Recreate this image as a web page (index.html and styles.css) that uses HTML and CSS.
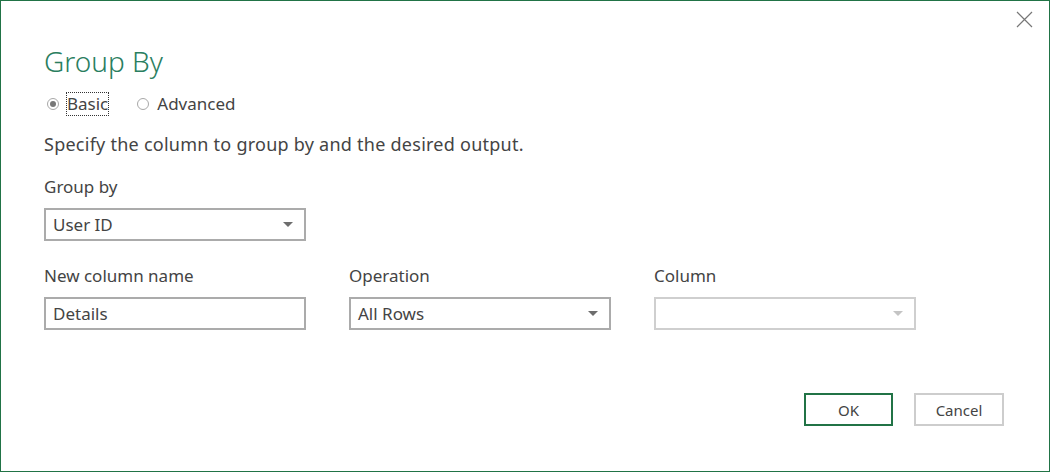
FILE: index.html
```html
<!DOCTYPE html>
<html>
<head>
<meta charset="utf-8">
<link rel="stylesheet" href="styles.css">
</head>
<body>
<div class="dialog">
  <button class="close" aria-label="Close">
    <svg width="17" height="17" viewBox="0 0 17 17"><path d="M1 1 L16 16 M16 1 L1 16" stroke="#777" stroke-width="1.2" fill="none"/></svg>
  </button>
  <h1 class="title">Group By</h1>
  <div class="radios">
    <label class="radio"><span class="circle checked"></span><span class="rlabel focus">Basic</span></label>
    <label class="radio"><span class="circle"></span><span class="rlabel">Advanced</span></label>
  </div>
  <p class="desc">Specify the column to group by and the desired output.</p>
  <div class="field">
    <div class="label">Group by</div>
    <div class="select"><span>User ID</span><span class="arrow"></span></div>
  </div>
  <div class="row">
    <div class="field">
      <div class="label">New column name</div>
      <div class="input">Details</div>
    </div>
    <div class="field">
      <div class="label">Operation</div>
      <div class="select"><span>All Rows</span><span class="arrow"></span></div>
    </div>
    <div class="field">
      <div class="label">Column</div>
      <div class="select disabled"><span></span><span class="arrow"></span></div>
    </div>
  </div>
  <div class="buttons">
    <button class="btn primary">OK</button>
    <button class="btn">Cancel</button>
  </div>
</div>
</body>
</html>
```
FILE: styles.css
```css
* { box-sizing: border-box; }
html, body { margin: 0; padding: 0; background: #fff; }
body { font-family: "Noto Sans", "Open Sans", sans-serif; color: #444; }
.dialog {
  position: relative;
  width: 1050px;
  height: 472px;
  border: 1px solid #217346;
  padding: 0 0 0 43px;
  display: flex;
  flex-direction: column;
}
.close {
  position: absolute;
  top: 9px;
  right: 15px;
  width: 19px;
  height: 19px;
  padding: 0;
  border: 0;
  background: transparent;
  display: flex;
  align-items: center;
  justify-content: center;
}
.title {
  margin: 40px 0 0 0;
  font-size: 28px;
  line-height: 40px;
  font-weight: 300;
  color: #2a7e60;
}
.radios {
  display: flex;
  gap: 29px;
  margin-top: 11px;
  height: 24px;
  align-items: center;
  padding-left: 3px;
}
.radio { display: flex; align-items: center; gap: 8px; font-size: 17px; }
.circle {
  width: 12px;
  height: 12px;
  border: 1px solid #a8a8a8;
  border-radius: 50%;
  display: flex;
  align-items: center;
  justify-content: center;
}
.circle.checked::after {
  content: "";
  width: 6px;
  height: 6px;
  border-radius: 50%;
  background: #777;
}
.rlabel { line-height: 22px; color: #444; }
.rlabel.focus { outline: 1px dotted #333; outline-offset: 0; }
.desc {
  margin: 16px 0 0 0;
  font-size: 18px;
  letter-spacing: 0.25px;
  line-height: 24px;
}
.field { display: flex; flex-direction: column; width: 262px; }
.label { font-size: 17px; line-height: 22px; height: 22px; margin-bottom: 10px; }
.desc + .field { margin-top: 20px; }
.row { display: flex; gap: 43px; margin-top: 24px; }
.select, .input {
  height: 33px;
  border: 2px solid #ababab;
  display: flex;
  align-items: center;
  justify-content: space-between;
  padding: 0 11px 0 7px;
  font-size: 17px;
  color: #444;
  background: #fff;
}
.select.disabled { border-color: #cfcfcf; }
.arrow {
  width: 0; height: 0;
  border-left: 5px solid transparent;
  border-right: 5px solid transparent;
  border-top: 5px solid #6d6d6d;
}
.disabled .arrow { border-top-color: #c4c4c4; }
.buttons {
  display: flex;
  justify-content: flex-end;
  gap: 21px;
  margin-top: 63px;
  padding-right: 45px;
}
.btn {
  width: 90px;
  height: 33px;
  border: 2px solid #cdcdcd;
  background: #fff;
  font-family: inherit;
  font-size: 15px;
  color: #444;
  padding: 0;
}
.btn.primary { border-color: #217346; width: 89px; }
```
